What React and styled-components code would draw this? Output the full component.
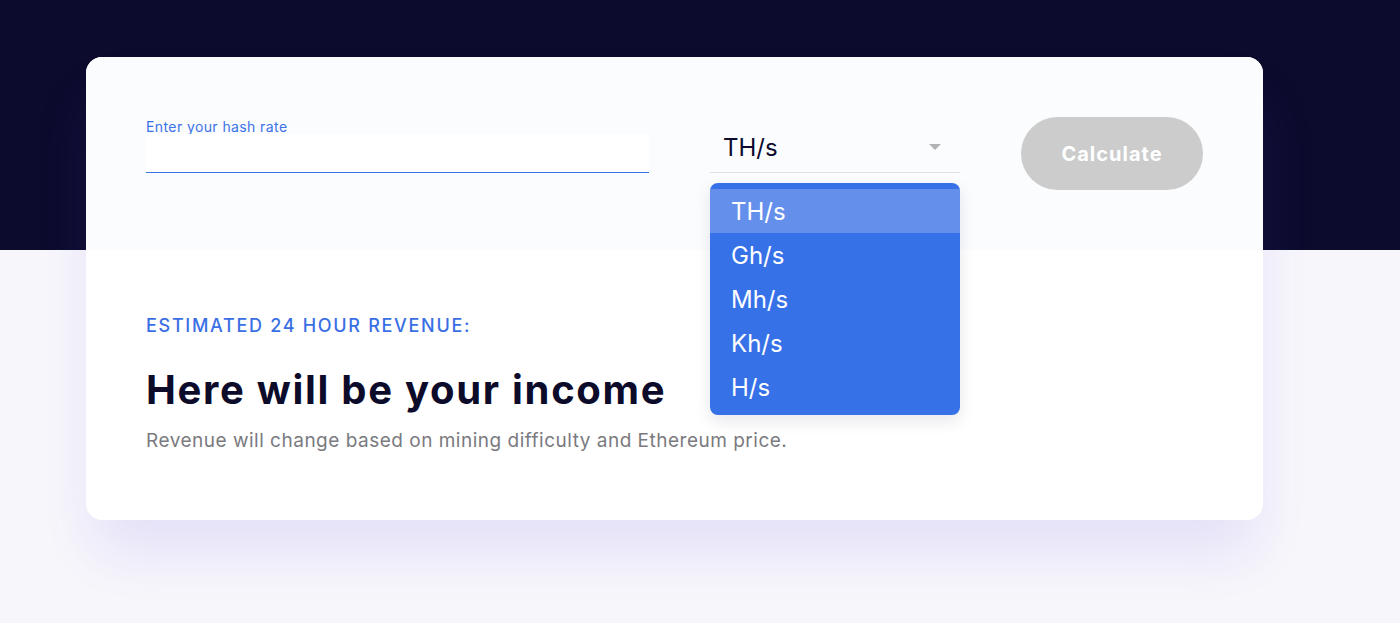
import React, { useState } from "react";
import styled, { createGlobalStyle } from "styled-components";

const Global = createGlobalStyle`
  html, body { margin: 0; padding: 0; }
  body {
    font-family: "Inter", "Roboto", sans-serif;
    background: linear-gradient(#0c0b2d 0 250px, #f7f7fb 250px);
    min-height: 623px;
    overflow: hidden;
  }
  * { box-sizing: border-box; }
`;

const Page = styled.div`
  padding-top: 57px;
  padding-left: 86px;
  height: 623px;
`;

const Card = styled.div`
  width: 1177px;
  border-radius: 16px;
  background: #ffffff;
  box-shadow: 0 40px 60px -6px rgba(112, 80, 230, 0.13);
`;

const TopSection = styled.div`
  height: 193px;
  background: #fbfcfe;
  border-radius: 16px 16px 0 0;
  padding: 60px 60px 0;
  display: flex;
  justify-content: space-between;
  align-items: flex-start;
`;

const Field = styled.label`
  display: flex;
  flex-direction: column;
  width: 503px;
  margin-top: 3px;
`;

const FieldLabel = styled.span`
  font-size: 14px;
  line-height: 14px;
  color: #3a72e8;
  letter-spacing: 0.4px;
`;

const Input = styled.input`
  height: 39px;
  border: none;
  border-bottom: 1px solid #3a72e8;
  background: #ffffff;
  outline: none;
  font-family: inherit;
  font-size: 18px;
  padding: 0;
`;

const SelectWrap = styled.div`
  position: relative;
  width: 250px;
`;

const SelectButton = styled.div`
  height: 56px;
  padding: 15px 19px 10px 13px;
  display: flex;
  align-items: center;
  justify-content: space-between;
  border-bottom: 1px solid #e2e2e4;
  font-size: 24px;
  color: #0c0b2d;
`;

const Menu = styled.ul`
  position: absolute;
  top: 66px;
  left: 0;
  width: 250px;
  margin: 0;
  padding: 6px 0;
  list-style: none;
  background: #3771e8;
  border-radius: 8px;
  box-shadow: 0 6px 16px rgba(20, 20, 60, 0.1);
  z-index: 5;
`;

const MenuItem = styled.li`
  height: 44px;
  padding: 0 21px;
  display: flex;
  align-items: center;
  font-size: 24px;
  color: #ffffff;
  background: ${(p) => (p.$active ? "#6490ec" : "transparent")};
`;

const Button = styled.button`
  width: 182px;
  height: 73px;
  border: none;
  border-radius: 37px;
  background: #cccccc;
  color: #ffffff;
  font-family: inherit;
  font-size: 20px;
  font-weight: 700;
  letter-spacing: 1px;
  cursor: pointer;
`;

const BottomSection = styled.div`
  padding: 64px 60px 67px;
`;

const Eyebrow = styled.div`
  font-size: 18px;
  line-height: 24px;
  font-weight: 500;
  color: #3a6fe4;
  letter-spacing: 1.7px;
`;

const Headline = styled.h1`
  margin: 28px 0 0;
  font-size: 40px;
  line-height: 48px;
  font-weight: 700;
  letter-spacing: 1.7px;
  color: #0c0b2a;
`;

const Sub = styled.p`
  margin: 15px 0 0;
  font-size: 19px;
  line-height: 24px;
  color: #7a7a80;
  letter-spacing: 0.5px;
`;

const Caret = () => (
  <svg width="12" height="6" viewBox="0 0 12 6">
    <path d="M0 0 L12 0 L6 6 Z" fill="#b3b3b3" />
  </svg>
);

const units = ["TH/s", "Gh/s", "Mh/s", "Kh/s", "H/s"];

export default function App() {
  const [unit] = useState("TH/s");
  return (
    <>
      <Global />
      <Page>
        <Card>
          <TopSection>
            <Field>
              <FieldLabel>Enter your hash rate</FieldLabel>
              <Input type="text" />
            </Field>
            <SelectWrap>
              <SelectButton>
                <span>{unit}</span>
                <Caret />
              </SelectButton>
              <Menu>
                {units.map((u) => (
                  <MenuItem key={u} $active={u === unit}>
                    {u}
                  </MenuItem>
                ))}
              </Menu>
            </SelectWrap>
            <Button>Calculate</Button>
          </TopSection>
          <BottomSection>
            <Eyebrow>ESTIMATED 24 HOUR REVENUE:</Eyebrow>
            <Headline>Here will be your income</Headline>
            <Sub>Revenue will change based on mining difficulty and Ethereum price.</Sub>
          </BottomSection>
        </Card>
      </Page>
    </>
  );
}
